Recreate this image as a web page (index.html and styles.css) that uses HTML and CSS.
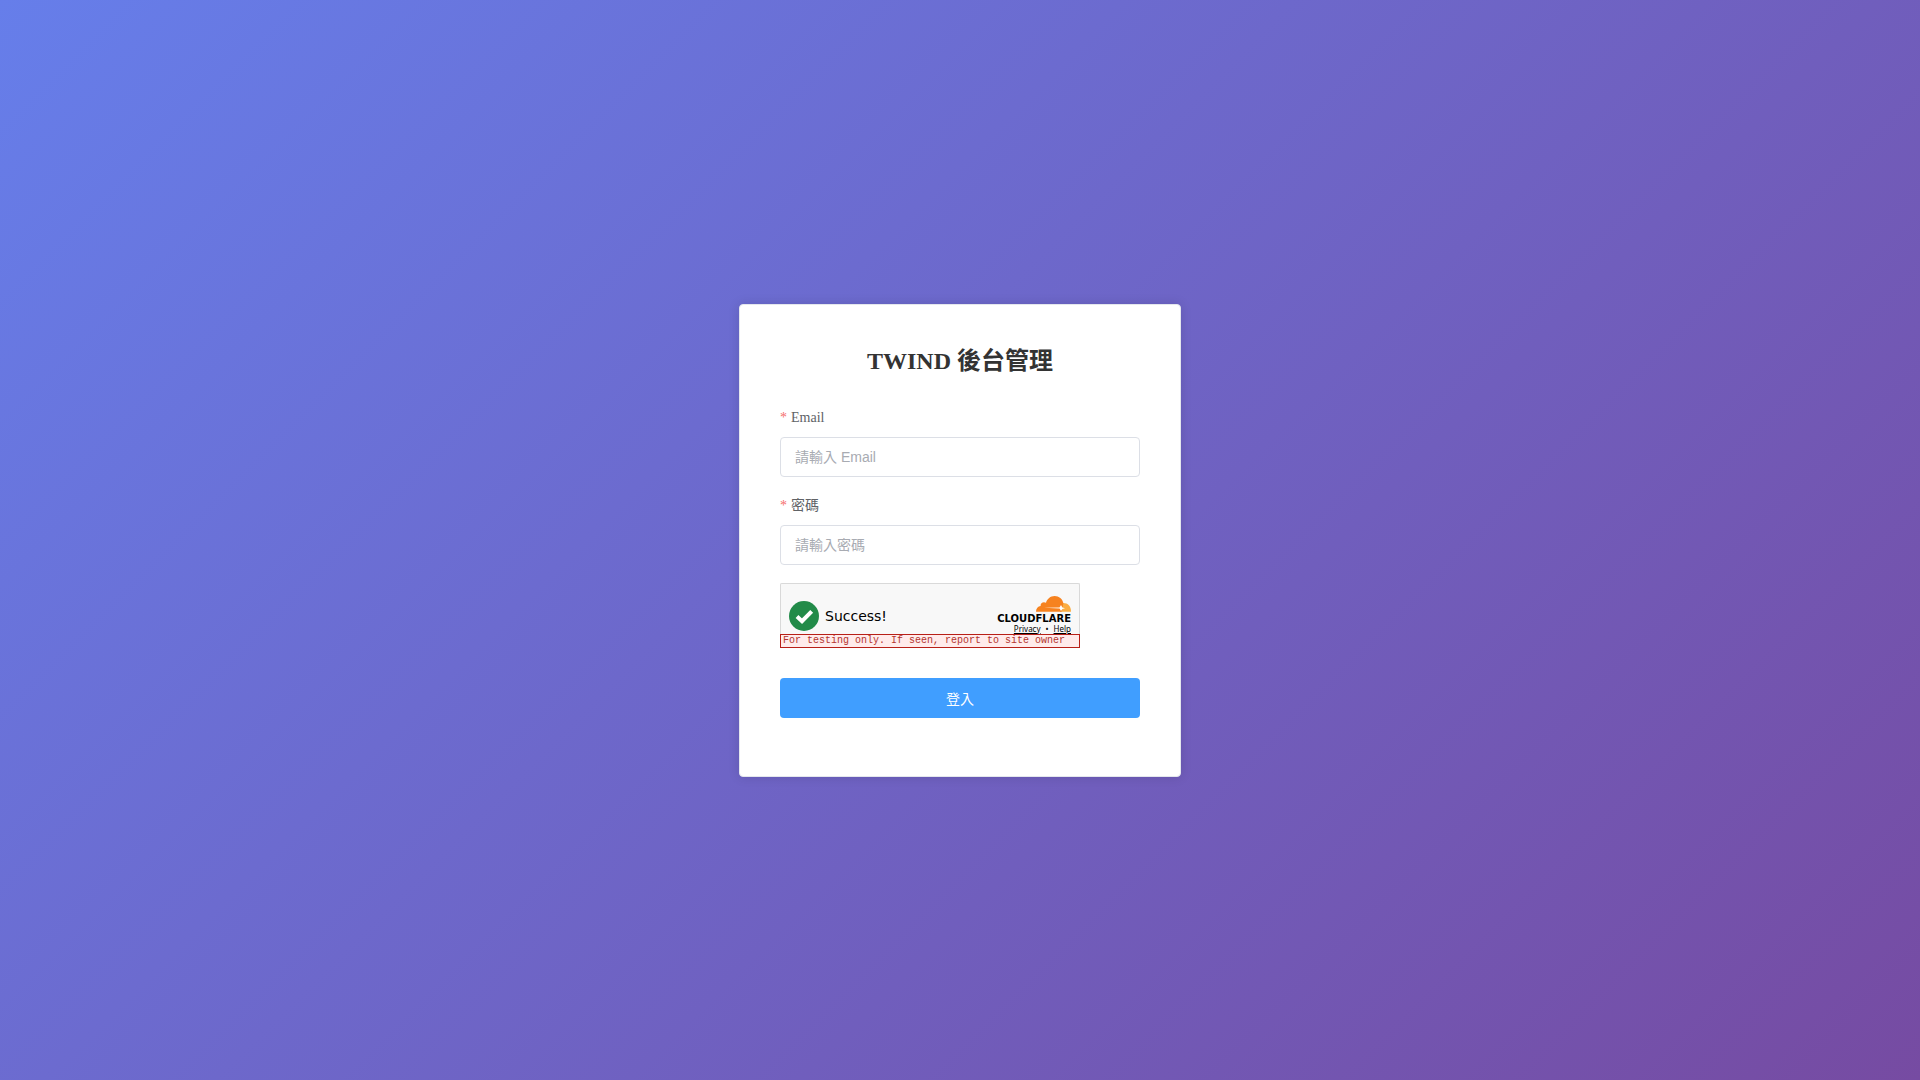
FILE: index.html
```html
<!DOCTYPE html>
<html lang="zh-TW">
<head>
    <meta charset="UTF-8">
    <meta name="viewport" content="width=device-width, initial-scale=1.0">
    <title>TWIND 後台管理</title>
    <link rel="stylesheet" href="styles.css">
</head>
<body>
    <main class="login-card">
        <h2 class="login-title">TWIND 後台管理</h2>

        <form class="login-form">
            <div class="form-item">
                <label class="form-label" for="email">Email</label>
                <input class="form-input" type="email" id="email" placeholder="請輸入 Email">
            </div>

            <div class="form-item">
                <label class="form-label" for="password">密碼</label>
                <input class="form-input" type="password" id="password" placeholder="請輸入密碼">
            </div>

            <!-- Turnstile -->
            <div class="turnstile">
                <div class="turnstile-body">
                    <div class="turnstile-status">
                        <svg class="success-icon" viewBox="0 0 30 30" aria-hidden="true">
                            <circle cx="15" cy="15" r="15" fill="#228b49"/>
                            <path d="M8 15.5l5 4.7L22.7 10.3" fill="none" stroke="#fff" stroke-width="4"/>
                        </svg>
                        <span class="success-text">Success!</span>
                    </div>
                    <div class="turnstile-brand">
                        <svg class="cloud-icon" viewBox="0 0 35 16" aria-hidden="true">
                            <path d="M25 7.2C31 6 35 9.500 35 15.700H24z" fill="#fbad41"/>
                            <path d="M0 15.700C0 12.500 2 10.300 4.600 10.100C4.200 7 7.500 5.200 10 6.800C11 2.800 14.500 0 18.600 0C23 0 26.600 3 27.400 7.200L25.600 15.700z" fill="#f6821f"/>
                            <path d="M8 11.800L23.500 11.500L25 9L26.400 11.400L29 12.200L26.400 13L25 15L23.600 12.600z" fill="#fff"/>
                        </svg>
                        <span class="brand-name">CLOUDFLARE</span>
                        <div class="brand-links">
                            <a href="#">Privacy</a><span>•</span><a href="#">Help</a>
                        </div>
                    </div>
                </div>
                <div class="turnstile-warning">For testing only. If seen, report to site owner</div>
            </div>

            <div class="form-item">
                <button class="login-button" type="submit">登入</button>
            </div>
        </form>
    </main>
</body>
</html>
```
FILE: styles.css
```css
* {
    box-sizing: border-box;
}

body {
    display: flex;
    align-items: center;
    justify-content: center;
    min-height: 100vh;
    margin: 0;
    background: linear-gradient(135deg, #667eea 0%, #764ba2 100%);
    font-family: "Liberation Serif", "Noto Sans CJK TC", serif;
}

.login-card {
    width: 100%;
    max-width: 442px;
    padding: 40px;
    background-color: #fff;
    border: 1px solid #e4e7ed;
    border-radius: 4px;
    box-shadow: 0 0 12px rgba(0, 0, 0, 0.12);
}

.login-title {
    margin: 0 0 30px;
    color: #333;
    font-size: 24px;
    line-height: 32px;
    text-align: center;
}

.form-item {
    margin-bottom: 18px;
}

.form-label {
    display: block;
    margin-bottom: 8px;
    color: #606266;
    font-size: 14px;
    line-height: 22px;
}

.form-label::before {
    content: "*";
    margin-right: 4px;
    color: #f56c6c;
}

.form-input {
    display: block;
    width: 100%;
    height: 40px;
    padding: 0 14px;
    border: 1px solid #dcdfe6;
    border-radius: 4px;
    color: #606266;
    font-family: "Liberation Sans", "Noto Sans CJK TC", sans-serif;
    font-size: 14px;
}

.form-input::placeholder {
    color: #a8abb2;
}

.turnstile {
    display: flex;
    flex-direction: column;
    max-width: 300px;
    height: 65px;
    margin-bottom: 30px;
    background-color: #f8f8f8;
    color: #000;
}

.turnstile-body {
    display: flex;
    flex: 1;
    align-items: flex-end;
    justify-content: space-between;
    padding: 0 8px;
    border: 1px solid #d9d9d9;
    border-bottom: 0;
    border-radius: 2px 2px 0 0;
}

.turnstile-status {
    display: flex;
    align-items: center;
    gap: 6px;
    padding-bottom: 3px;
    font-family: "DejaVu Sans", sans-serif;
    font-size: 14px;
}

.success-icon {
    width: 30px;
    height: 30px;
}

.turnstile-brand {
    display: flex;
    flex-direction: column;
    align-items: flex-end;
}

.cloud-icon {
    width: 35px;
    height: 16px;
}

.brand-name {
    margin-top: 1px;
    font-family: "DejaVu Sans", sans-serif;
    font-size: 10px;
    font-weight: bold;
    line-height: 11px;
}

.brand-links {
    display: flex;
    gap: 5px;
    font-family: "Noto Sans", sans-serif;
    font-size: 8px;
    line-height: 10px;
}

.brand-links a {
    color: #000;
}

.turnstile-warning {
    height: 14px;
    padding: 0 2px;
    border: 1px solid #b81f17;
    background-color: #ffebeb;
    color: #b3352f;
    font-family: "Liberation Mono", monospace;
    font-size: 10px;
    line-height: 12px;
    white-space: nowrap;
    overflow: hidden;
}

.login-button {
    display: block;
    width: 100%;
    height: 40px;
    border: 0;
    border-radius: 4px;
    background-color: #409eff;
    color: #fff;
    font-family: "Liberation Sans", "Noto Sans CJK TC", sans-serif;
    font-size: 14px;
    cursor: pointer;
}

.login-button:hover {
    background-color: #79bbff;
}
```
